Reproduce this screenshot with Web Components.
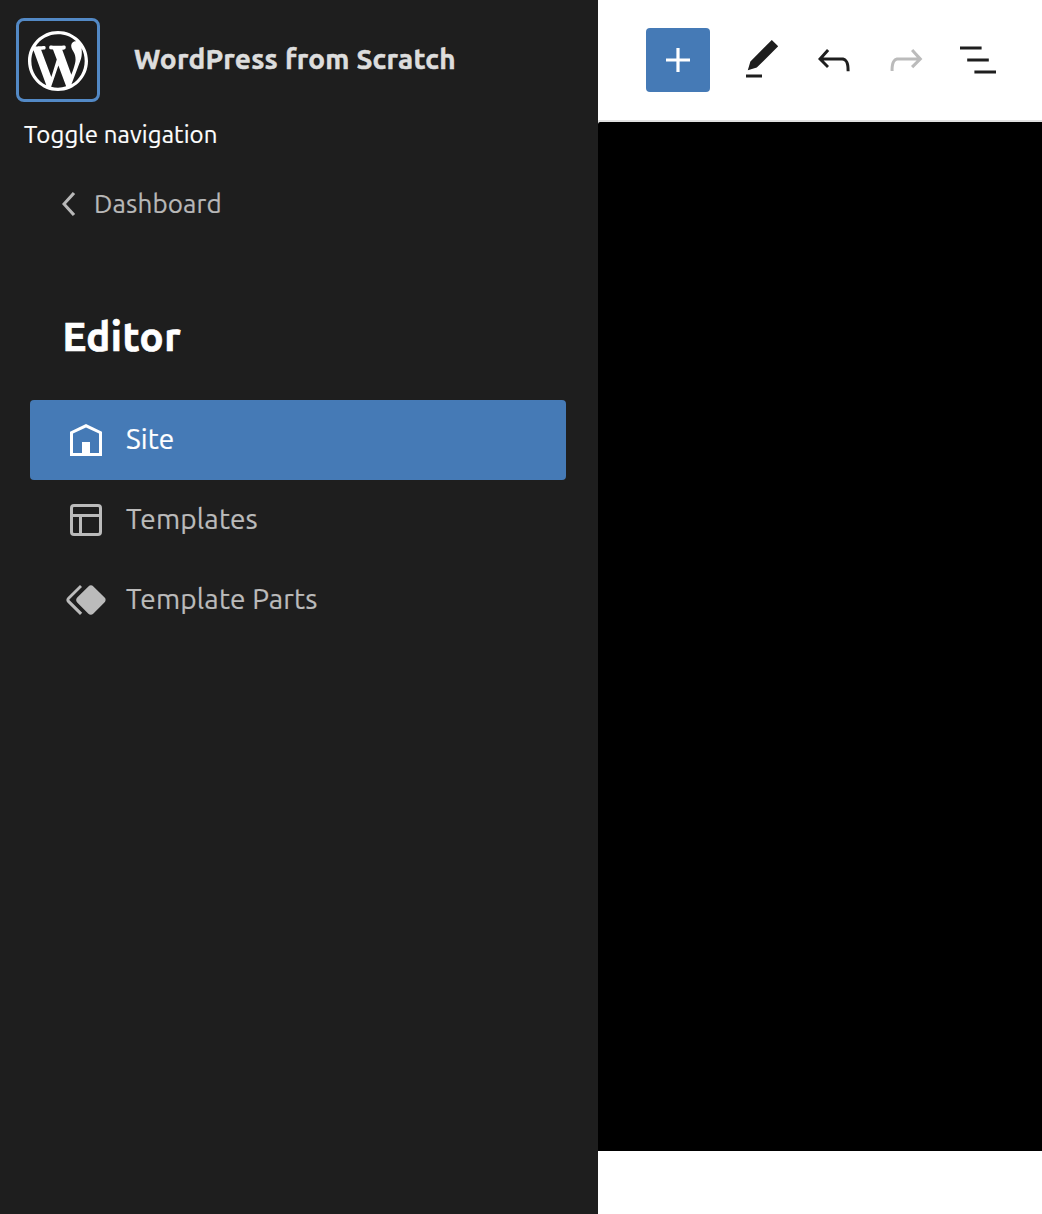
<!DOCTYPE html>
<html lang="en">
<head>
<meta charset="utf-8">
<title>Editor</title>
<style>
html,body{margin:0;height:100%}
body{font-family:Ubuntu,"Noto Sans",sans-serif;background:#fff;overflow:hidden}
</style>
</head>
<body>
<site-editor></site-editor>
<script>
const icons = {
  wordpress: 'M20 10c0-5.51-4.49-10-10-10C4.48 0 0 4.49 0 10c0 5.52 4.48 10 10 10 5.51 0 10-4.48 10-10zM7.78 15.37L4.37 6.22c.55-.02 1.17-.08 1.17-.08.5-.06.44-1.13-.06-1.11 0 0-1.45.11-2.37.11-.18 0-.37 0-.58-.01C4.12 2.69 6.87 1.11 10 1.11c2.33 0 4.45.87 6.05 2.34-.68-.11-1.65.39-1.65 1.58 0 .74.45 1.36.9 2.1.35.61.55 1.36.55 2.46 0 1.49-1.4 5-1.4 5l-3.03-8.37c.54-.02.82-.17.82-.17.5-.05.44-1.25-.06-1.22 0 0-1.44.12-2.38.12-.87 0-2.33-.12-2.33-.12-.5-.03-.56 1.2-.06 1.22l.92.08 1.26 3.41zM17.41 10c.24-.64.74-1.87.43-4.25.7 1.29 1.05 2.71 1.05 4.25 0 3.29-1.73 6.24-4.4 7.78.97-2.59 1.94-5.2 2.92-7.78zM6.1 18.09C3.12 16.65 1.11 13.53 1.11 10c0-1.3.23-2.48.72-3.59C3.25 10.3 4.67 14.2 6.1 18.09zm4.03-6.63l2.58 6.98c-.86.29-1.76.45-2.71.45-.79 0-1.57-.11-2.29-.33.81-2.38 1.62-4.74 2.42-7.1z',
  chevron: 'M14.6 7l-1.2-1L8 12l5.4 6 1.2-1-4.6-5z',
  home: 'M12 4L4 7.9V20h16V7.9L12 4zm6.5 14.5H14V13h-4v5.5H5.5V8.8L12 5.7l6.5 3.1v9.7z',
  layout: 'M18 5.5H6a.5.5 0 00-.5.5v3h13V6a.5.5 0 00-.5-.5zm.5 5H10v8h8a.5.5 0 00.5-.5v-7.5zm-10 0h-3V18a.5.5 0 00.5.5h2.5v-8zM6 4h12a2 2 0 012 2v12a2 2 0 01-2 2H6a2 2 0 01-2-2V6a2 2 0 012-2z',
  symbol: 'M21.3 10.8l-5.6-5.6c-.7-.7-1.8-.7-2.5 0l-5.6 5.6c-.7.7-.7 1.8 0 2.5l5.6 5.6c.3.3.8.5 1.2.5s.9-.2 1.2-.5l5.6-5.6c.8-.7.8-1.9.1-2.5zm-17.6 1L10 5.5l-1-1-6.3 6.3c-.7.7-.7 1.8 0 2.5L9 19.5l1.1-1.1-6.3-6.3c-.2 0-.2-.2-.1-.3z',
  plus: 'M18 11.2h-5.2V6h-1.6v5.2H6v1.6h5.2V18h1.6v-5.2H18z',
  pencil: 'M20.1 5.1L16.9 2 6.2 12.7l-1.3 4.4 4.5-1.3L20.1 5.1zM4 20.8h8v-1.5H4v1.5z',
  undo: 'M18.3 11.7c-.6-.6-1.4-.9-2.3-.9H6.7l2.9-3.3-1.1-1-4.5 5L8.5 16l1-1-2.7-2.7H16c.5 0 .9.2 1.3.5 1 1 1 3.4 1 4.5v.3h1.5v-.2c0-1.5 0-4.3-1.5-5.7z',
  redo: 'M15.6 6.5l-1.1 1 2.9 3.3H8c-.9 0-1.7.3-2.3.9-1.4 1.5-1.4 4.2-1.4 5.6v.2h1.5v-.3c0-1.1 0-3.5 1-4.5.3-.3.7-.5 1.3-.5h9.2L14.5 15l1.1 1.1 4.6-4.6-4.6-5z',
  list: 'M13.8 5.2H3v1.5h10.8V5.2zm-3.6 12v1.5H21v-1.5H10.2zm7.2-6H6.6v1.5h10.8v-1.5z'
};
const define = (name, render) => customElements.define(name, class extends HTMLElement {
  constructor() { super(); this.attachShadow({mode: 'open'}); }
  connectedCallback() { this.shadowRoot.innerHTML = render(this); }
});

define('ui-icon', el => {
  const name = el.getAttribute('name'), box = name === 'wordpress' ? 20 : 24;
  return `<style>:host{display:block;flex:none;width:var(--size,48px);height:var(--size,48px)}svg{display:block;width:100%;height:100%;fill:currentColor}</style>
  <svg viewBox="0 0 ${box} ${box}" aria-hidden="true"><path d="${icons[name]}"/></svg>`;
});

define('site-hub', () => `<style>
:host{display:flex;flex-direction:column;padding:18px 16px 0}
.row{display:flex;align-items:center;gap:34px}
.toggle{box-sizing:border-box;width:84px;height:84px;border:3px solid #5389c5;border-radius:8px;display:flex;justify-content:center;padding-top:10px;color:#fff;--size:60px}
.title{font-weight:700;font-size:28px;line-height:36px;color:#ddd;letter-spacing:.22px;-webkit-text-stroke:.5px #ddd;white-space:nowrap;margin-top:-2px}
.tip{font-size:24px;line-height:32px;color:#fff;margin:17px 0 0 8px;letter-spacing:.12px;-webkit-text-stroke:.2px #fff;white-space:nowrap}
</style>
<div class="row"><div class="toggle"><ui-icon name="wordpress"></ui-icon></div><div class="title"><slot></slot></div></div>
<div class="tip"><slot name="tip"></slot></div>`);

define('back-link', () => `<style>
:host{display:flex;align-items:center;height:48px;margin:29px 0 0 46px;color:#b8b8b8;font-size:26px;line-height:36px}
span{letter-spacing:.14px;-webkit-text-stroke:.2px currentColor}
</style><ui-icon name="chevron"></ui-icon><span><slot></slot></span>`);

define('nav-item', el => `<style>
:host{display:flex;align-items:center;height:80px;padding-left:32px;gap:16px;border-radius:4px;color:#bbb;font-size:28px;line-height:38px}
:host([active]){background:#457ab6;color:#fff}
span{letter-spacing:.15px;-webkit-text-stroke:.2px currentColor;margin-top:-2px;white-space:nowrap}
</style><ui-icon name="${el.getAttribute('icon')}"></ui-icon><span><slot></slot></span>`);

define('tool-button', el => `<style>
:host{display:flex;align-items:center;justify-content:center;width:64px;height:64px;border-radius:4px;color:#1e1e1e}
:host([primary]){background:#457ab6;color:#fff}
:host([disabled]){color:#bbb}
</style><ui-icon name="${el.getAttribute('icon')}"></ui-icon>`);

define('editor-sidebar', () => `<style>
:host{display:flex;flex-direction:column;width:598px;flex:none;background:#1e1e1e}
h1{margin:81px 0 0 62.5px;font-size:40px;line-height:56px;font-weight:700;color:#fff;letter-spacing:.5px;-webkit-text-stroke:.7px #fff}
nav{display:flex;flex-direction:column;margin:35px 32px 0 30px}
</style>
<site-hub>WordPress from Scratch<span slot="tip">Toggle navigation</span></site-hub>
<back-link>Dashboard</back-link>
<h1>Editor</h1>
<nav><nav-item icon="home" active>Site</nav-item><nav-item icon="layout">Templates</nav-item><nav-item icon="symbol">Template Parts</nav-item></nav>`);

define('editor-canvas', () => `<style>
:host{display:flex;flex-direction:column;flex:1;min-width:0;background:#fff}
header{box-sizing:border-box;height:122px;border-bottom:2px solid #e0e0e0;display:flex;align-items:flex-start;padding:28px 0 0 48px}
tool-button{flex:none}
tool-button:nth-child(2){margin-left:20px}
tool-button:nth-child(n+3){margin-left:8px}
main{height:1029px;background:#000;border-top-left-radius:2px}
</style>
<header><tool-button icon="plus" primary></tool-button><tool-button icon="pencil"></tool-button><tool-button icon="undo"></tool-button><tool-button icon="redo" disabled></tool-button><tool-button icon="list"></tool-button></header>
<main></main>`);

define('site-editor', () => `<style>:host{display:flex;height:100vh}</style><editor-sidebar></editor-sidebar><editor-canvas></editor-canvas>`);
</script>
</body>
</html>
